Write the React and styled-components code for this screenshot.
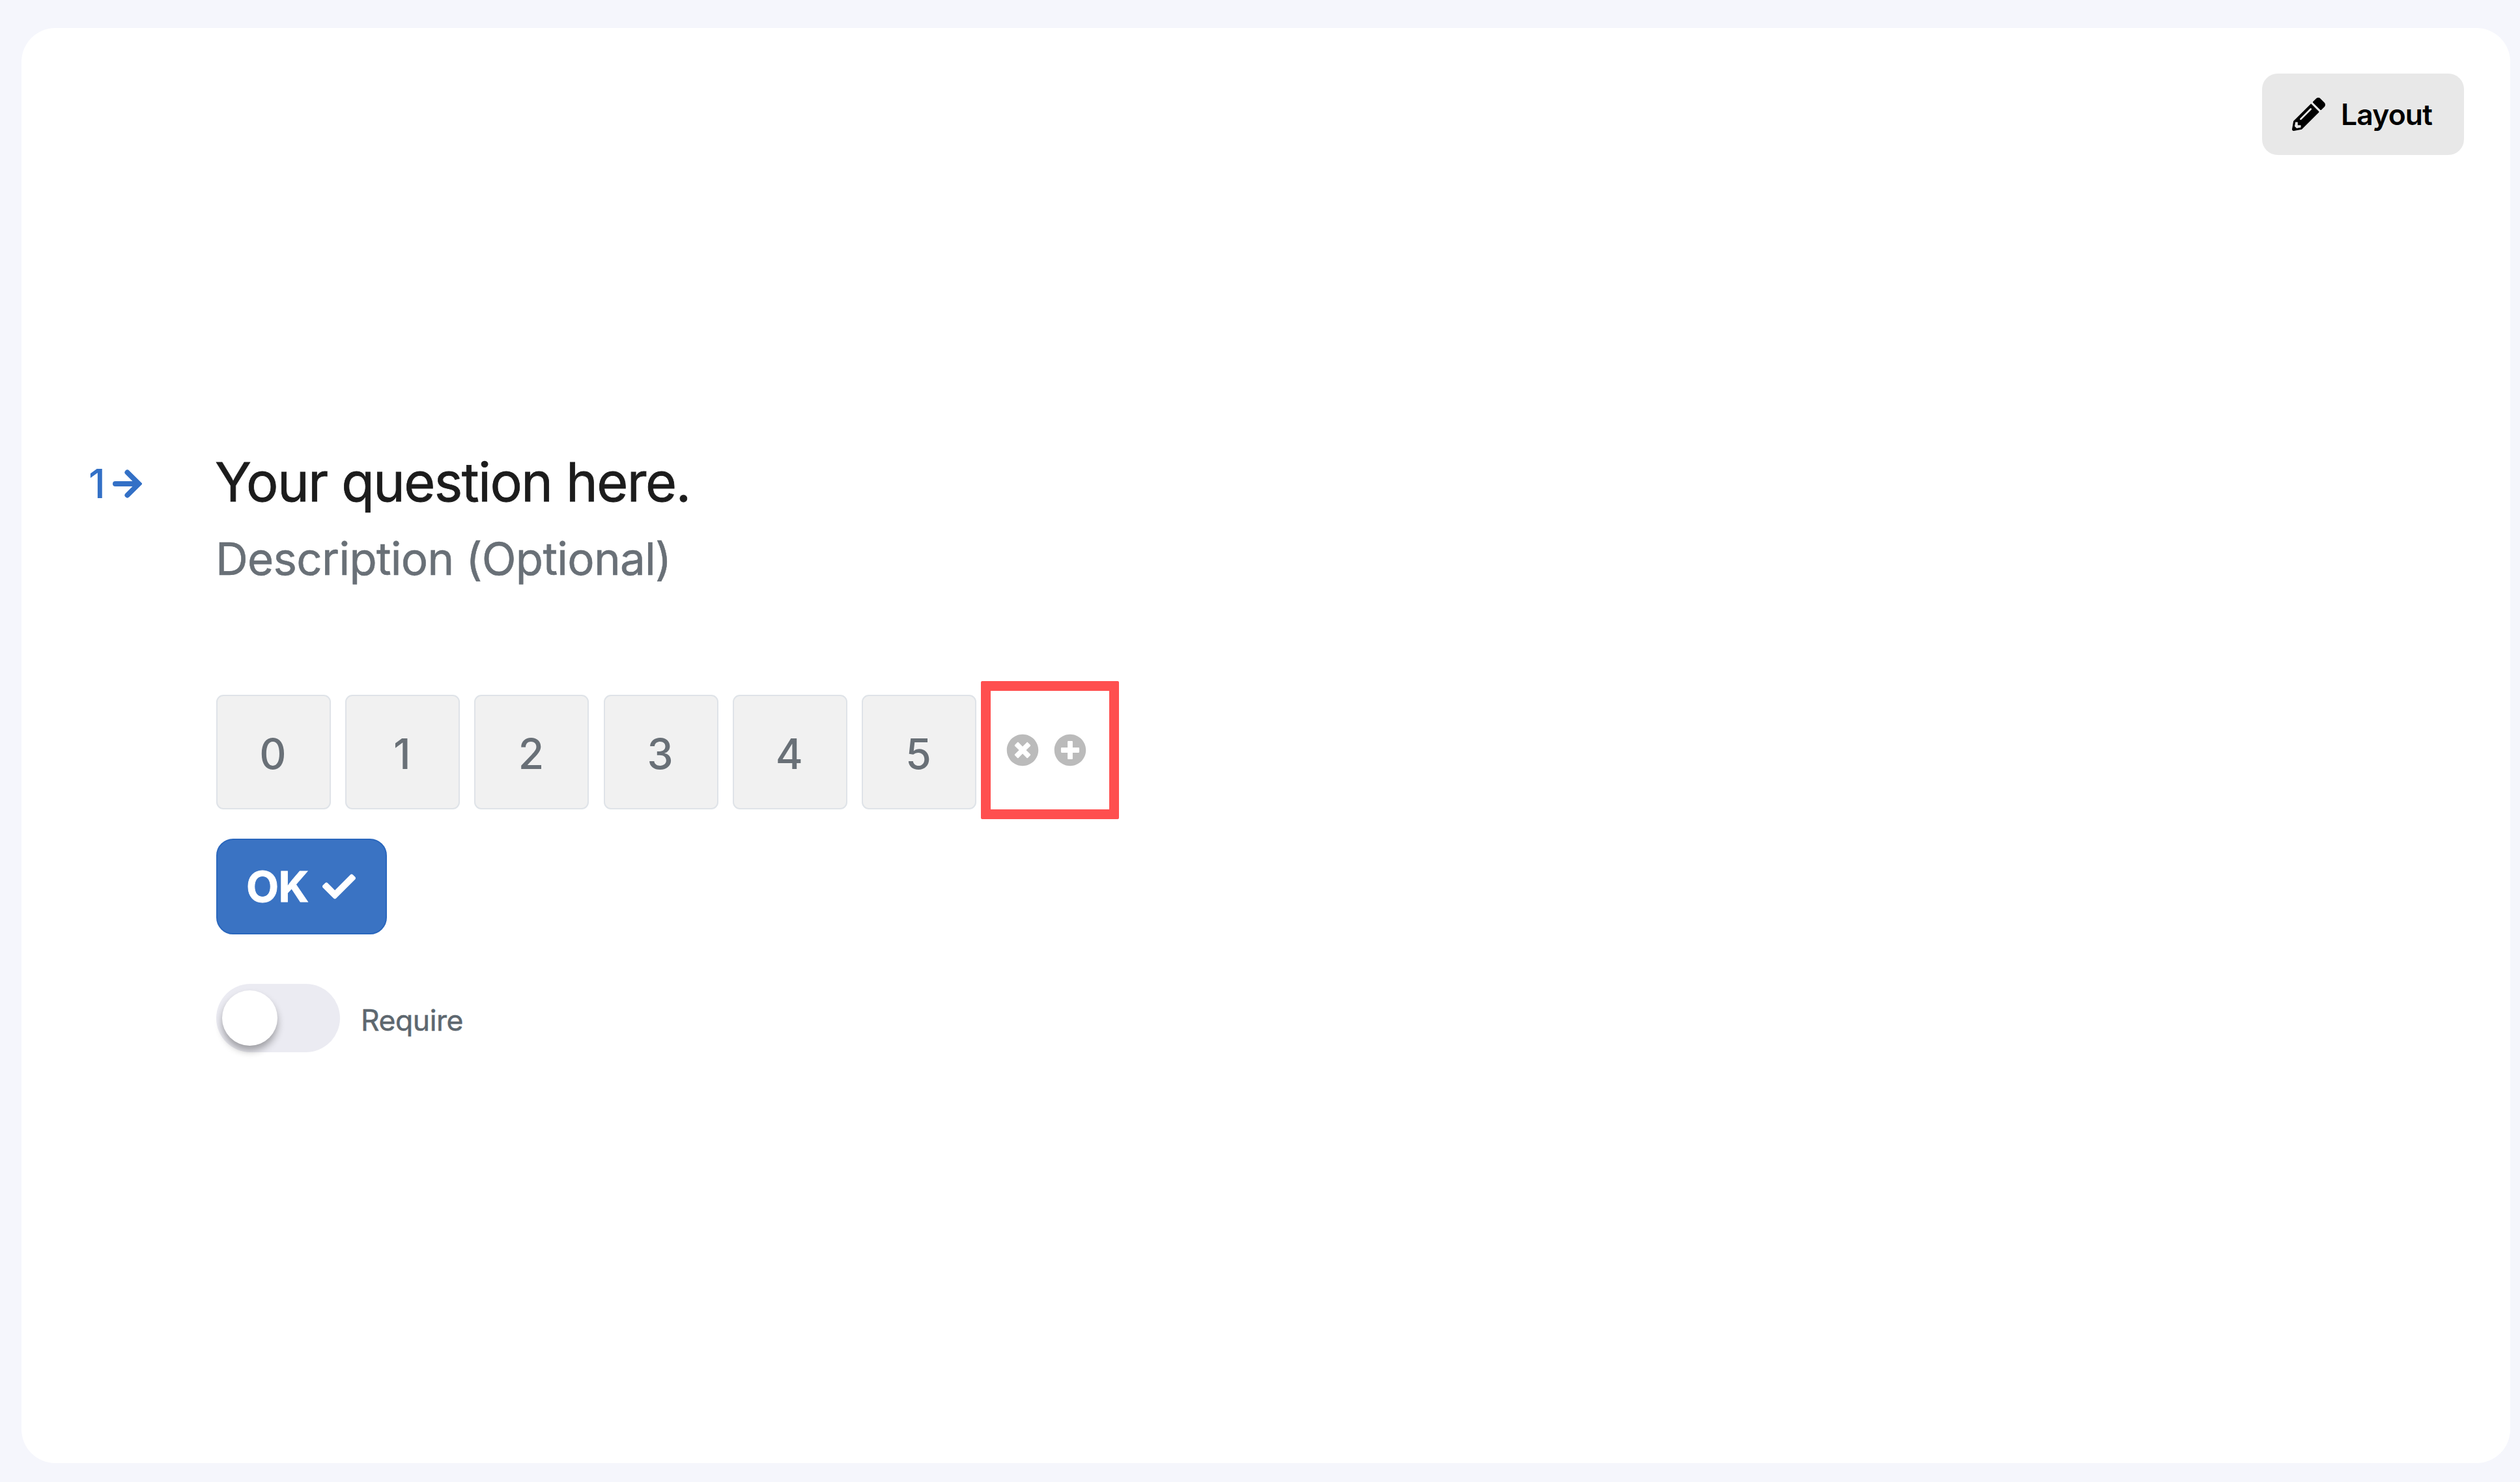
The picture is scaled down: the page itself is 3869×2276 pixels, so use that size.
import React from 'react'
import { useState } from 'react'
import styled, { createGlobalStyle } from 'styled-components'
import { FaCheck, FaPencilAlt, FaPlusCircle, FaTimesCircle } from 'react-icons/fa'

const GlobalStyle = createGlobalStyle`
  * {
    box-sizing: border-box;
  }
  body {
    margin: 0;
    background: #f5f6fc;
    font-family: Inter, "Liberation Sans", sans-serif;
  }
  button {
    font-family: inherit;
    cursor: pointer;
  }
`

const Page = styled.div`
  display: flex;
  height: 2276px;
  padding: 43px 15px 29px 33px;
`

const Card = styled.main`
  flex: 1;
  display: flex;
  flex-direction: column;
  background: #ffffff;
  border-radius: 52px;
`

const Header = styled.header`
  display: flex;
  justify-content: flex-end;
  padding: 70px 71px 0 0;
`

const LayoutButton = styled.button`
  display: flex;
  align-items: center;
  gap: 24px;
  width: 310px;
  height: 125px;
  padding: 0 0 0 46px;
  border: none;
  border-radius: 24px;
  background: #e8e8e8;
  color: #000000;
  font-size: 44.5px;
  font-weight: 560;
  letter-spacing: -0.9px;
`

const Question = styled.section`
  display: flex;
  padding: 452px 0 0 103px;
`

const QuestionNumber = styled.div`
  display: flex;
  align-items: center;
  gap: 11px;
  width: 196px;
  height: 100px;
  padding-top: 5px;
  color: #3370c6;
  font-size: 62px;
  font-weight: 500;
`

const QuestionBody = styled.div`
  display: flex;
  flex-direction: column;
  align-items: flex-start;
`

const Title = styled.h1`
  margin: 0 0 0 -2px;
  color: #1c1c1c;
  font-size: 82.5px;
  font-weight: 400;
  line-height: 100px;
  letter-spacing: -1.6px;
  white-space: nowrap;
  -webkit-text-stroke: 0.8px currentColor;
`

const Description = styled.p`
  margin: 18px 0 0 -1px;
  color: #697077;
  font-size: 69px;
  font-weight: 400;
  line-height: 100px;
  letter-spacing: -0.7px;
  white-space: nowrap;
  -webkit-text-stroke: 0.6px currentColor;
`

const Scale = styled.div`
  display: flex;
  align-items: flex-start;
  margin-top: 138px;
`

const ScaleOptions = styled.div`
  display: flex;
  gap: 22.2px;
  padding-top: 21px;
`

const Option = styled.button`
  width: 176px;
  height: 176px;
  padding: 4px 2px 0 0;
  border: 2px solid #dfe3e8;
  border-radius: 11px;
  background: #f1f1f1;
  color: #697077;
  font-size: 64px;
  font-weight: 500;
`

const OptionActions = styled.div`
  display: flex;
  align-items: center;
  gap: 23px;
  width: 212px;
  height: 212px;
  margin-left: 7px;
  padding-left: 24px;
  border: 15px solid #ff4f4f;
  border-radius: 2px;
  color: #bbbbbb;
`

const OkButton = styled.button`
  display: flex;
  align-items: center;
  gap: 21px;
  width: 262px;
  height: 147px;
  margin-top: 30px;
  padding: 0 0 0 44px;
  border: 2px solid #2a67bd;
  border-radius: 26px;
  background: #3a73c3;
  color: #ffffff;
  font-size: 65px;
  font-weight: 700;
  letter-spacing: -0.6px;
  -webkit-text-stroke: 0.8px currentColor;
`

const RequireRow = styled.label`
  display: flex;
  align-items: center;
  gap: 32px;
  margin-top: 76px;
  color: #5d676f;
  font-size: 44.5px;
  letter-spacing: -0.45px;
`

const RequireText = styled.span`
  padding-top: 7px;
  -webkit-text-stroke: 0.5px currentColor;
`

const Switch = styled.button`
  display: flex;
  align-items: center;
  justify-content: ${(props) => (props.$on ? 'flex-end' : 'flex-start')};
  width: 190px;
  height: 105px;
  padding: 0 9px;
  border: none;
  border-radius: 53px;
  background: ${(props) => (props.$on ? '#3a73c3' : '#ebebf2')};
`

const Knob = styled.span`
  width: 85px;
  height: 85px;
  border-radius: 50%;
  background: #ffffff;
  box-shadow: 0 8px 12px rgba(0, 0, 0, 0.32);
`

const options = [0, 1, 2, 3, 4, 5]

const ArrowIcon = () => (
  <svg width="45" height="44" viewBox="0 0 45 44" fill="none" stroke="currentColor" strokeWidth="8" strokeLinecap="round">
    <path d="M4 22H38M22.5 4.5L40 22L22.5 39.5" />
  </svg>
)

function App() {
  const [required, setRequired] = useState(false)

  const list = options.map((x) => {
    return <Option key={x}>{x}</Option>
  })

  return (
    <Page>
      <GlobalStyle />
      <Card>
        <Header>
          <LayoutButton>
            <FaPencilAlt size={51} />
            Layout
          </LayoutButton>
        </Header>
        <Question>
          <QuestionNumber>
            1
            <ArrowIcon />
          </QuestionNumber>
          <QuestionBody>
            <Title>Your question here.</Title>
            <Description>Description (Optional)</Description>
            <Scale>
              <ScaleOptions>{list}</ScaleOptions>
              <OptionActions>
                <FaTimesCircle size={50} />
                <FaPlusCircle size={50} />
              </OptionActions>
            </Scale>
            <OkButton>
              OK
              <FaCheck size={51} />
            </OkButton>
            <RequireRow>
              <Switch $on={required} onClick={() => setRequired(!required)}>
                <Knob />
              </Switch>
              <RequireText>Require</RequireText>
            </RequireRow>
          </QuestionBody>
        </Question>
      </Card>
    </Page>
  )
}

export default App
